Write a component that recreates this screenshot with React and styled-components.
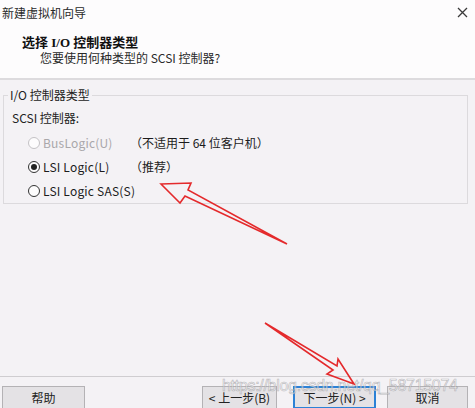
import React from "react";
import styled, { createGlobalStyle, css } from "styled-components";

const GlobalStyle = createGlobalStyle`
  html, body {
    margin: 0;
    padding: 0;
    background: #f4f2f5;
  }
  body {
    font-family: "Noto Sans CJK SC", "Liberation Sans", sans-serif;
    color: #1c1c1c;
  }
`;

const Window = styled.div`
  position: relative;
  width: 475px;
  height: 408px;
  display: flex;
  flex-direction: column;
  overflow: hidden;
  background: #f4f2f5;
`;

const TitleBar = styled.div`
  height: 24px;
  flex: none;
  display: flex;
  align-items: center;
  justify-content: space-between;
  padding: 0 7px 0 2px;
  background: #fdfcfd;
  font-size: 12px;
  color: #2a2a2a;
`;

const CloseIcon = () => (
  <svg width="11" height="11" viewBox="0 0 11 11">
    <path d="M1 1 L10 10 M10 1 L1 10" stroke="#3a3a3a" strokeWidth="1.3" />
  </svg>
);

const Header = styled.div`
  height: 56px;
  flex: none;
  padding: 11px 0 0 22px;
  box-sizing: border-box;
  background: #fdfcfd;
  border-bottom: 2px solid #dddbde;
`;

const HeaderTitle = styled.div`
  font-family: "Liberation Serif", "Noto Sans CJK SC", serif;
  font-weight: bold;
  font-size: 13px;
  line-height: 15px;
  color: #111;
`;

const HeaderSub = styled.div`
  padding-left: 18px;
  font-size: 12px;
  line-height: 15px;
  color: #2a2a2a;
`;

const Body = styled.div`
  flex: 1;
  padding: 7px 7px 0 3px;
`;

const GroupBox = styled.fieldset`
  margin: 0;
  padding: 0;
  border: 1px solid #dcdadd;
  font-size: 12px;
`;

const Legend = styled.legend`
  margin-left: 4px;
  padding: 0 2px;
  line-height: 16px;
  font-size: 12px;
  color: #222;
`;

const FieldLabel = styled.div`
  margin: 7px 0 5px 8px;
  line-height: 16px;
  color: #222;
`;

const Row = styled.div`
  height: 24px;
  display: flex;
  align-items: center;
  padding-left: 24px;
  white-space: nowrap;
  color: ${(p) => (p.disabled ? "#a9a7aa" : "#1c1c1c")};
`;

const RadioCircle = styled.span`
  flex: none;
  width: 10px;
  height: 10px;
  border-radius: 50%;
  border: 1px solid ${(p) => (p.disabled ? "#c4c2c5" : "#333")};
  background: #fdfcfd;
  margin-right: 3px;
  display: flex;
  align-items: center;
  justify-content: center;

  ${(p) =>
    p.checked &&
    css`
      &::after {
        content: "";
        width: 6px;
        height: 6px;
        border-radius: 50%;
        background: #222;
      }
    `}
`;

const RadioText = styled.span`
  flex: none;
  min-width: 87px;
  line-height: 16px;
  letter-spacing: 0.2px;
`;

const Note = styled.span`
  line-height: 16px;
  color: #1c1c1c;
`;

const Footer = styled.div`
  height: 32px;
  flex: none;
  box-sizing: border-box;
  border-top: 1px solid #cfcdd0;
  padding: 9px 7px 0 2px;
  display: flex;
  align-items: flex-start;
`;

const Button = styled.button`
  flex: none;
  width: ${(p) => p.w}px;
  height: 23px;
  margin-left: ${(p) => p.gap || 0}px;
  box-sizing: border-box;
  border: 1px solid #b4b2b5;
  background: #e4e2e5;
  font-family: "Noto Sans CJK SC", "Liberation Sans", sans-serif;
  font-size: 12px;
  color: #222;
  padding: 0;

  ${(p) =>
    p.primary &&
    css`
      border: 2px solid #2c82d6;
    `}
`;

const Spacer = styled.div`
  flex: 1;
`;

const Watermark = styled.div`
  position: absolute;
  left: 222px;
  top: 377px;
  font-family: "Liberation Sans", sans-serif;
  font-size: 16px;
  letter-spacing: -0.3px;
  color: rgba(250, 250, 250, 0.55);
  -webkit-text-stroke: 0.6px rgba(130, 130, 135, 0.55);
  pointer-events: none;
  white-space: nowrap;
`;

const Annotations = styled.svg`
  position: absolute;
  left: 0;
  top: 0;
  pointer-events: none;
`;

const options = [
  { label: "BusLogic(U)", note: "（不适用于 64 位客户机）", disabled: true },
  { label: "LSI Logic(L)", note: "（推荐）", checked: true },
  { label: "LSI Logic SAS(S)" },
];

const App = () => (
  <Window>
    <GlobalStyle />
    <TitleBar>
      <span>新建虚拟机向导</span>
      <CloseIcon />
    </TitleBar>
    <Header>
      <HeaderTitle>选择 I/O 控制器类型</HeaderTitle>
      <HeaderSub>您要使用何种类型的 SCSI 控制器?</HeaderSub>
    </Header>
    <Body>
      <GroupBox>
        <Legend>I/O 控制器类型</Legend>
        <FieldLabel>SCSI 控制器:</FieldLabel>
        {options.map((o) => (
          <Row key={o.label} disabled={o.disabled}>
            <RadioCircle checked={o.checked} disabled={o.disabled} />
            <RadioText>{o.label}</RadioText>
            {o.note && <Note>{o.note}</Note>}
          </Row>
        ))}
      </GroupBox>
    </Body>
    <Footer>
      <Button w={83}>帮助</Button>
      <Spacer />
      <Button w={75}>&lt; 上一步(B)</Button>
      <Button w={83} gap={16} primary>
        下一步(N) &gt;
      </Button>
      <Button w={81} gap={11}>
        取消
      </Button>
    </Footer>
    <Watermark>https://blog.csdn.net/qq_58715074</Watermark>
    <Annotations width="475" height="408" viewBox="0 0 475 408">
      <polygon
        points="161,184 191,183 188,190 287,244 185,196 180,203"
        fill="none"
        stroke="#e42a2c"
        strokeWidth="1.6"
        strokeLinejoin="miter"
      />
      <polygon
        points="265,323 337,366 338,359 354,384 327,374 333,370"
        fill="none"
        stroke="#e42a2c"
        strokeWidth="1.6"
        strokeLinejoin="miter"
      />
    </Annotations>
  </Window>
);

export default App;
